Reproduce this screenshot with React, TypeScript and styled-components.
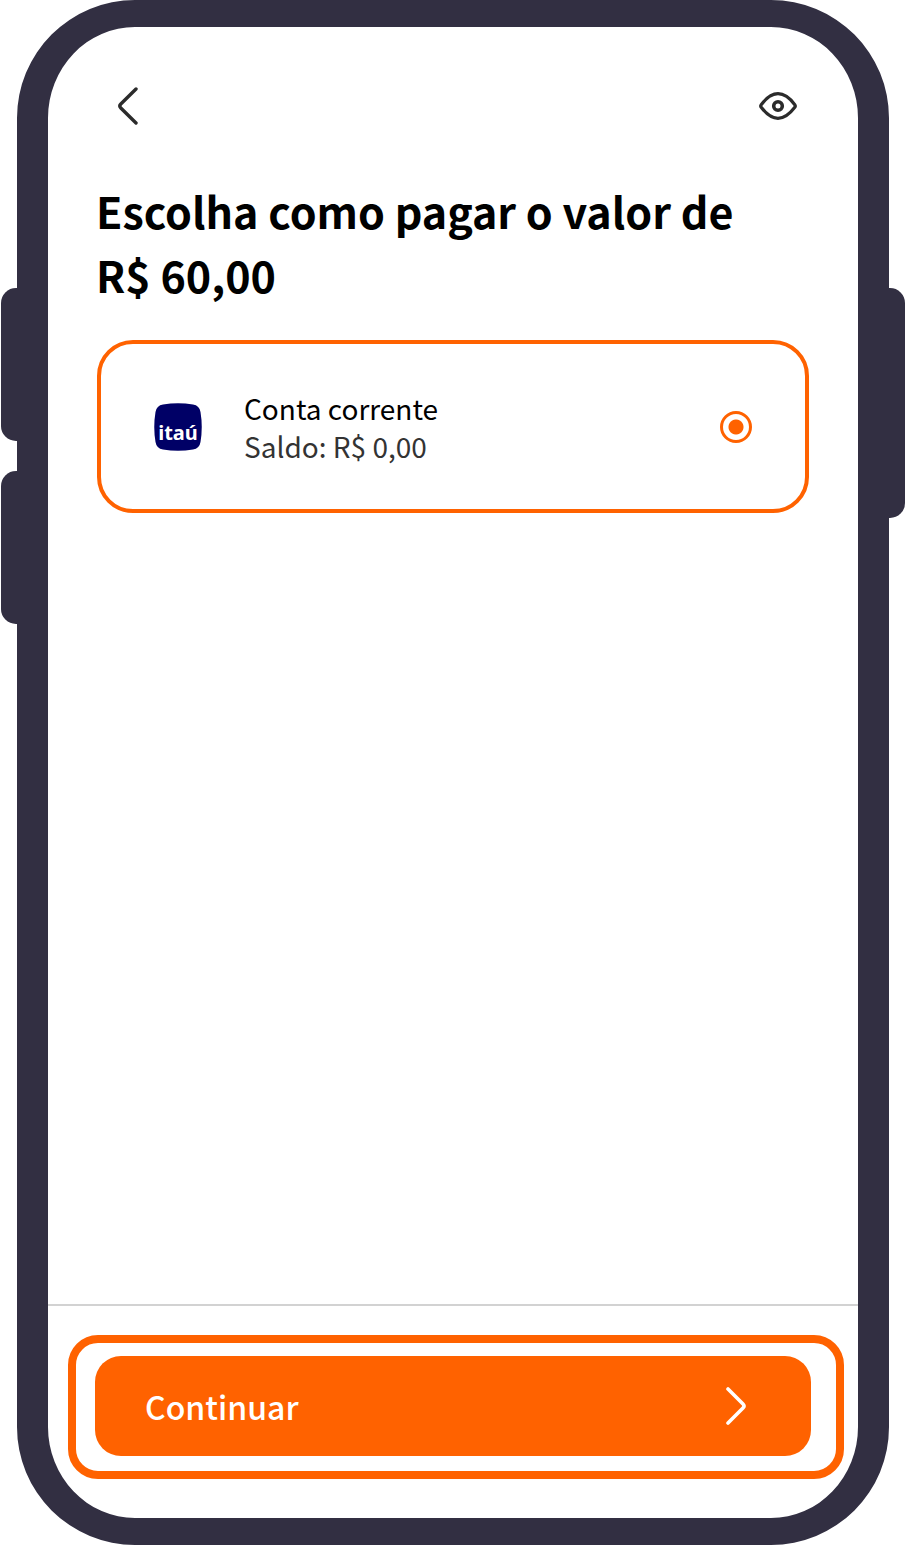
import React, { useState } from "react";
import styled, { createGlobalStyle } from "styled-components";

const colors = {
  frame: "#322f42",
  orange: "#ff6200",
  navy: "#000066",
  ink: "#2b2b2b",
};

const GlobalStyle = createGlobalStyle`
  *, *::before, *::after { box-sizing: border-box; }
  body {
    margin: 0;
    background: #fff;
    color: #000;
    font-family: "Noto Sans CJK JP", "Noto Sans", sans-serif;
  }
`;

const Device = styled.div`
  display: flex;
  min-height: 100vh;
  padding: 0 1px;
`;

const Rail = styled.div`
  display: flex;
  flex-direction: column;
  gap: 30px;
  flex: none;
  width: 16px;
  padding-top: 288px;
`;

const SideKey = styled.span<{ $side: "left" | "right"; $length: number }>`
  height: ${(p) => p.$length}px;
  background: ${colors.frame};
  border-radius: ${(p) => (p.$side === "left" ? "15px 0 0 15px" : "0 15px 15px 0")};
`;

const Shell = styled.div`
  display: flex;
  flex: 1;
  min-width: 0;
  border: solid ${colors.frame};
  border-width: 27px 31px;
  border-radius: 118px;
  background: #fff;
`;

const Screen = styled.div`
  display: flex;
  flex-direction: column;
  flex: 1;
  min-width: 0;
`;

const TopBar = styled.header`
  display: flex;
  align-items: center;
  justify-content: space-between;
  padding: 55px 56px 0;
`;

const IconButton = styled.button`
  display: flex;
  align-items: center;
  justify-content: center;
  width: 48px;
  height: 48px;
  padding: 0;
  border: 0;
  background: none;
  color: ${colors.ink};
  cursor: pointer;
`;

const Main = styled.main`
  flex: 1;
  padding: 48px 48px 0;
`;

const Title = styled.h1`
  margin: 0 0 34px;
  font-size: 43px;
  font-weight: 700;
  line-height: 64px;
`;

const AccountOption = styled.label`
  display: flex;
  align-items: center;
  gap: 42px;
  height: 173px;
  margin: 0 1px;
  padding: 0 53px;
  border: 4px solid ${colors.orange};
  border-radius: 36px;
  cursor: pointer;
`;

const AccountText = styled.span`
  display: flex;
  flex-direction: column;
  flex: 1;
  font-size: 28px;
  line-height: 38px;
`;

const Balance = styled.span`
  color: #333;
`;

const Radio = styled.input`
  appearance: none;
  flex: none;
  width: 32px;
  height: 32px;
  margin: 0;
  border: 3px solid ${colors.orange};
  border-radius: 50%;
  background: #fff;

  &:checked {
    background: radial-gradient(circle, ${colors.orange} 0 7px, #fff 8px);
  }
`;

const Footer = styled.footer`
  padding: 29px 14px 39px 20px;
  border-top: 2px solid #d2d2d2;
`;

const Highlight = styled.div`
  padding: 13px 25px 15px 19px;
  border: 8px solid ${colors.orange};
  border-radius: 30px;
`;

const ContinueButton = styled.button`
  display: flex;
  align-items: center;
  justify-content: space-between;
  width: 100%;
  height: 100px;
  padding: 0 64px 0 50px;
  border: 0;
  border-radius: 26px;
  background: ${colors.orange};
  color: #fff;
  font-family: inherit;
  font-size: 32px;
  font-weight: 500;
  line-height: 48px;
  cursor: pointer;
`;

const BackIcon = () => (
  <svg width="22" height="40" viewBox="0 0 22 40" fill="none" stroke="currentColor" strokeWidth="3.400" strokeLinecap="round" aria-hidden="true">
    <path d="M19 3 L3.800 18 Q1.800 20 3.800 22 L19 37" />
  </svg>
);

const EyeIcon = () => (
  <svg width="40" height="30" viewBox="0 0 40 30" fill="none" stroke="currentColor" strokeWidth="3.200" strokeLinejoin="round" aria-hidden="true">
    <path d="M3.200 13.700 C9 6 14 2.700 20 2.700 C26 2.700 31 6 36.800 13.700 Q37.800 15 36.800 16.300 C31 24 26 27.300 20 27.300 C14 27.300 9 24 3.200 16.300 Q2.200 15 3.200 13.700 Z" />
    <circle cx="20" cy="15" r="4.300" strokeWidth="3.600" />
  </svg>
);

const ForwardIcon = () => (
  <svg width="22" height="40" viewBox="0 0 22 40" fill="none" stroke="currentColor" strokeWidth="3.600" strokeLinecap="round" aria-hidden="true">
    <path d="M3 3 L18 18 Q20 20 18 22 L3 37" />
  </svg>
);

const LogoText = styled.text`
  fill: #fff;
  font-family: "Noto Sans", sans-serif;
  font-size: 20px;
  font-weight: 700;
  text-anchor: middle;
`;

const BankLogo = () => (
  <svg width="48" height="48" viewBox="0 0 48 48" role="img" aria-label="itaú">
    <path d="M9 1.500 Q24 -1 39 1.500 Q45.500 2.500 46.500 9 Q49 24 46.500 39 Q45.500 45.500 39 46.500 Q24 49 9 46.500 Q2.500 45.500 1.500 39 Q-1 24 1.500 9 Q2.500 2.500 9 1.500 Z" fill={colors.navy} />
    <LogoText x="24" y="37">itaú</LogoText>
  </svg>
);

export default function App() {
  const [account, setAccount] = useState("corrente");

  return (
    <>
      <GlobalStyle />
      <Device>
        <Rail>
          <SideKey $side="left" $length={153} />
          <SideKey $side="left" $length={153} />
        </Rail>
        <Shell>
          <Screen>
            <TopBar>
              <IconButton type="button" aria-label="Voltar">
                <BackIcon />
              </IconButton>
              <IconButton type="button" aria-label="Ocultar valores">
                <EyeIcon />
              </IconButton>
            </TopBar>
            <Main>
              <Title>
                Escolha como pagar o valor de
                <br />
                R$ 60,00
              </Title>
              <AccountOption>
                <BankLogo />
                <AccountText>
                  <span>Conta corrente</span>
                  <Balance>Saldo: R$ 0,00</Balance>
                </AccountText>
                <Radio
                  type="radio"
                  name="account"
                  value="corrente"
                  checked={account === "corrente"}
                  onChange={(e) => setAccount(e.target.value)}
                />
              </AccountOption>
            </Main>
            <Footer>
              <Highlight>
                <ContinueButton type="button">
                  Continuar
                  <ForwardIcon />
                </ContinueButton>
              </Highlight>
            </Footer>
          </Screen>
        </Shell>
        <Rail>
          <SideKey $side="right" $length={230} />
        </Rail>
      </Device>
    </>
  );
}
